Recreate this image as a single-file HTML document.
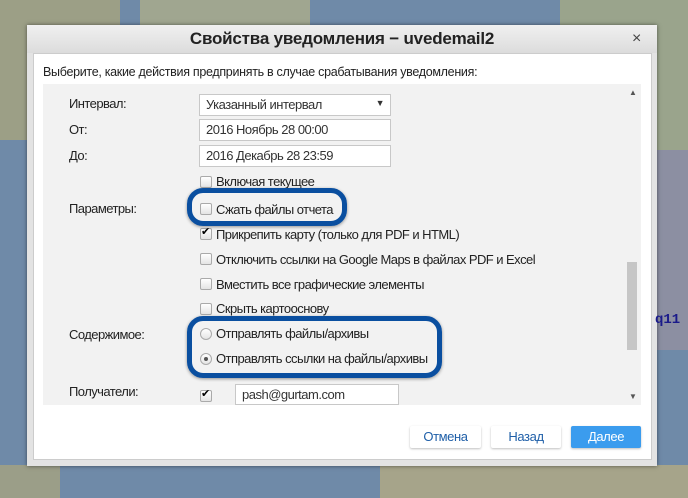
<!DOCTYPE html><html><head><meta charset="utf-8"><style>
body{margin:0;width:688px;height:498px;overflow:hidden;position:relative;font-family:"Liberation Sans",sans-serif;background:#6f8aa8}
.a{position:absolute}
.lbl{position:absolute;font-size:13px;color:#222;letter-spacing:-0.55px;white-space:nowrap}
.inp{position:absolute;background:#fff;border:1px solid #c8c8c8;height:20px;box-sizing:border-box;font-size:13px;color:#333;padding:2px 6px;letter-spacing:-0.5px;white-space:nowrap}
.cb{position:absolute;width:10px;height:10px;border:1px solid #aaa;border-radius:2px;background:linear-gradient(#fff,#e4e4e4)}
.rd{position:absolute;width:10px;height:10px;border:1px solid #aaa;border-radius:50%;background:linear-gradient(#fff,#e4e4e4)}
.ring{position:absolute;border:5px solid #0a4fa0;border-radius:16px;box-shadow:0 1px 3px rgba(0,0,0,.4)}
.btn{position:absolute;top:426px;height:22px;font-size:13px;line-height:22px;text-align:center;border-radius:2px;box-shadow:0 1px 2px rgba(0,0,0,.25);letter-spacing:-0.4px}
</style></head><body>
<div class="a" style="left:0;top:0;width:120px;height:140px;background:#9c9f86;border-radius:0 0 60px 0"></div>
<div class="a" style="left:140px;top:0;width:170px;height:25px;background:#a0a690"></div>
<div class="a" style="left:560px;top:0;width:128px;height:150px;background:#9aa48c"></div>
<div class="a" style="left:640px;top:150px;width:48px;height:200px;background:#8c8fa2"></div>
<div class="a" style="left:380px;top:465px;width:308px;height:33px;background:#a6a48a"></div>
<div class="a" style="left:0;top:465px;width:60px;height:33px;background:#9b9e88"></div>
<div class="a" style="left:27px;top:25px;width:630px;height:441px;background:#e3e3e3;box-shadow:0 0 4px rgba(0,0,0,.5)"></div>
<div class="a" style="left:27px;top:25px;width:630px;height:28px;background:linear-gradient(#f0f0f0,#dcdcdc);text-align:center;font-size:17px;font-weight:bold;line-height:28px;color:#222;letter-spacing:-0.2px">Свойства уведомления − uvedemail2</div>
<div class="a" style="left:632px;top:30px;font-size:16px;color:#444">×</div>
<div class="a" style="left:33px;top:53px;width:619px;height:407px;background:#fff;border:1px solid #ccc;box-sizing:border-box"></div>
<div class="lbl" style="left:43px;top:65px;font-size:12.5px;letter-spacing:-0.3px">Выберите, какие действия предпринять в случае срабатывания уведомления:</div>
<div class="a" style="left:43px;top:84px;width:598px;height:321px;background:#f2f2f2"></div>
<div class="a" style="left:629px;top:88px;font-size:8px;color:#555">▲</div>
<div class="a" style="left:629px;top:392px;font-size:8px;color:#555">▼</div>
<div class="a" style="left:627px;top:262px;width:10px;height:88px;background:#c6c6c6"></div>
<div class="lbl" style="left:69px;top:96px">Интервал:</div>
<div class="lbl" style="left:69px;top:122px">От:</div>
<div class="lbl" style="left:69px;top:148px">До:</div>
<div class="inp" style="left:199px;top:94px;width:192px;height:22px">Указанный интервал<span style="position:absolute;right:6px;top:3px;font-size:9px">▼</span></div>
<div class="inp" style="left:199px;top:119px;width:192px;height:22px">2016 Ноябрь 28 00:00</div>
<div class="inp" style="left:199px;top:145px;width:192px;height:22px">2016 Декабрь 28 23:59</div>
<div class="cb" style="left:200px;top:176px"></div><div class="lbl" style="left:216px;top:174px">Включая текущее</div>
<div class="lbl" style="left:69px;top:201px">Параметры:</div>
<div class="cb" style="left:200px;top:203px"></div><div class="lbl" style="left:216px;top:202px">Сжать файлы отчета</div>
<div class="cb" style="left:200px;top:228px"></div><div class="a" style="left:201px;top:225px;font-size:11px">✔</div><div class="lbl" style="left:216px;top:227px">Прикрепить карту (только для PDF и HTML)</div>
<div class="cb" style="left:200px;top:253px"></div><div class="lbl" style="left:216px;top:252px">Отключить ссылки на Google Maps в файлах PDF и Excel</div>
<div class="cb" style="left:200px;top:278px"></div><div class="lbl" style="left:216px;top:277px">Вместить все графические элементы</div>
<div class="cb" style="left:200px;top:303px"></div><div class="lbl" style="left:216px;top:301px">Скрыть картооснову</div>
<div class="lbl" style="left:69px;top:327px">Содержимое:</div>
<div class="rd" style="left:200px;top:328px"></div><div class="lbl" style="left:216px;top:326px">Отправлять файлы/архивы</div>
<div class="rd" style="left:200px;top:353px"><div style="position:absolute;left:3px;top:3px;width:4px;height:4px;border-radius:50%;background:#555"></div></div><div class="lbl" style="left:216px;top:351px">Отправлять ссылки на файлы/архивы</div>
<div class="lbl" style="left:69px;top:384px">Получатели:</div>
<div class="cb" style="left:200px;top:390px"></div><div class="a" style="left:201px;top:387px;font-size:11px">✔</div>
<div class="inp" style="left:235px;top:384px;width:164px;height:21px">pash@gurtam.com</div>
<div class="ring" style="left:187px;top:188px;width:150px;height:28px"></div>
<div class="ring" style="left:187px;top:316px;width:245px;height:52px"></div>
<div class="btn" style="left:410px;width:71px;background:#fff;color:#1f5fa8">Отмена</div>
<div class="btn" style="left:491px;width:70px;background:#fff;color:#1f5fa8">Назад</div>
<div class="btn" style="left:571px;width:70px;background:#3b9cee;color:#fff">Далее</div>
<div class="a" style="left:655px;top:312px;font:bold 14px 'Liberation Mono',monospace;color:#1a1a8a">q11</div>
</body></html>
